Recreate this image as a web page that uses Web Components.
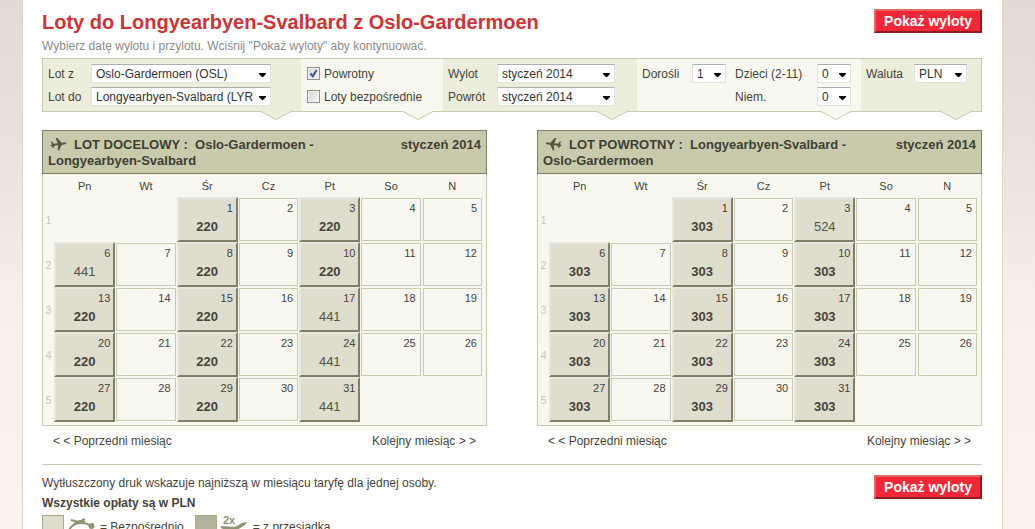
<!DOCTYPE html>
<html lang="pl">
<head>
<meta charset="utf-8">
<title>Loty do Longyearbyen-Svalbard z Oslo-Gardermoen</title>
<style>
html { height: 100%; overflow: hidden; }
body {
  margin: 0; min-height: 100%; color: #45443a;
  font: 12px/16px "Liberation Sans", Arial, sans-serif;
  background: linear-gradient(#e3d9d5 0, #e9dfdb 130px, #f8efeb 300px, #fcf2ee 529px) #fcf2ee;
}
</style>
</head>
<body>
<flight-page></flight-page>
<script>
const define = (name, html) => customElements.define(name, class extends HTMLElement {
  connectedCallback() {
    if (this.shadowRoot) return;
    const t = document.createElement('template');
    t.innerHTML = typeof html === 'function' ? html(this) : html;
    this.attachShadow({ mode: 'open' }).append(t.content.cloneNode(true));
  }
});

define('action-button', `
<style>
:host { display: block; flex: none; }
button {
  display: block; height: 24px; padding: 0 8px; color: #fff; cursor: pointer;
  font: bold 14px/20px "Liberation Sans", Arial, sans-serif;
  background: #f42738; border: 2px solid; border-color: #e4695f #8c1d1c #8c1d1c #e4695f; border-radius: 0;
}
</style>
<button type="button"><slot></slot></button>`);

define('drop-down', el => `
<style>
:host { display: flex; align-items: center; height: 19px; }
label { flex: none; width: var(--label, auto); white-space: nowrap; }
select {
  appearance: none; box-sizing: border-box; width: var(--field, 100px); height: 19px; margin: 0; padding: 0 17px 0 4px;
  font: 12px/16px "Liberation Sans", Arial, sans-serif; color: #333;
  border: 1px solid #e0e2dc; border-top-color: #adb0b0; border-radius: 1px;
  background: #fff url("data:image/svg+xml,%3Csvg xmlns='http://www.w3.org/2000/svg' width='7' height='4'%3E%3Cpath d='M0 0h7v1L4 4H3L0 1z'/%3E%3C/svg%3E") no-repeat right 4px top 8px;
}
</style>
<label for="s">${el.getAttribute('label')}</label>
<select id="s"><option>${el.getAttribute('value')}</option></select>`);

define('check-option', el => `
<style>
:host { display: flex; align-items: center; height: 19px; gap: 4px; }
input {
  appearance: none; box-sizing: border-box; flex: none; width: 13px; height: 13px; margin: 0;
  border: 1px solid #8e8f8f; box-shadow: inset 0 0 0 1px #f4f4f4;
  background: linear-gradient(135deg, #cfd2d6, #f6f6f6);
}
input:checked {
  background: url("data:image/svg+xml,%3Csvg xmlns='http://www.w3.org/2000/svg' width='11' height='11'%3E%3Cpath d='M2.5 5.5L4.8 8.3 8.6 2' fill='none' stroke='%233f5797' stroke-width='2'/%3E%3C/svg%3E"), linear-gradient(135deg, #cfd2d6, #f6f6f6);
}
label { white-space: nowrap; }
</style>
<input type="checkbox" id="c" ${el.hasAttribute('checked') ? 'checked' : ''}><label for="c"><slot></slot></label>`);

define('bar-section', `
<style>
:host {
  --fill: #f8f8f0; position: relative; display: grid; grid-template-rows: 19px 19px; row-gap: 4px; column-gap: 9px;
  padding: 5px; justify-content: start; background: var(--fill);
}
:host([tinted]) { --fill: #ecedda; }
:host([inset]) { padding-left: 6px; }
svg { position: absolute; right: 10px; top: 100%; display: block; fill: var(--fill); stroke: #c9caae; }
</style>
<slot></slot>
<svg width="30" height="9" viewBox="0 0 30 9" aria-hidden="true"><path stroke="none" d="M0 0H30V1L15 9 0 1z"/><path fill="none" d="M0 .5L15 8.5 30 .5"/></svg>`);

define('search-bar', `
<style>
:host { display: grid; grid-template-columns: 258fr 142fr 194fr 224fr 120fr; border: 1px solid #c9caae; }
.route { --label: 43px; --field: 180px; }
.dates { --label: 49px; --field: 118px; }
.adults { --label: 50px; --field: 34px; }
.kids { --label: 82px; --field: 34px; grid-column: 2; }
.money { --label: 48px; --field: 53px; }
</style>
<bar-section tinted>
  <drop-down class="route" label="Lot z" value="Oslo-Gardermoen (OSL)"></drop-down>
  <drop-down class="route" label="Lot do" value="Longyearbyen-Svalbard (LYR"></drop-down>
</bar-section>
<bar-section inset>
  <check-option checked>Powrotny</check-option>
  <check-option>Loty bezpośrednie</check-option>
</bar-section>
<bar-section tinted>
  <drop-down class="dates" label="Wylot" value="styczeń 2014"></drop-down>
  <drop-down class="dates" label="Powrót" value="styczeń 2014"></drop-down>
</bar-section>
<bar-section>
  <drop-down class="adults" label="Dorośli" value="1"></drop-down>
  <drop-down class="kids" label="Dzieci (2-11)" value="0"></drop-down>
  <drop-down class="kids" label="Niem." value="0"></drop-down>
</bar-section>
<bar-section tinted>
  <drop-down class="money" label="Waluta" value="PLN"></drop-down>
</bar-section>`);

define('plane-icon', `
<style>
:host { display: inline-block; width: 17px; height: 14px; vertical-align: -3px; }
:host([back]) svg { transform: scaleX(-1); }
svg { display: block; fill: #55543f; }
</style>
<svg width="17" height="14" viewBox="0 0 17 14" aria-hidden="true"><path d="M16.500 5.200C16 4.200 14 4.300 11.400 4.700L7.200 -.2 5.600 0 7.800 5.200 4 5.800 2 3.600 .8 3.800 2.100 6.300 .5 7.300 .6 8.200 2.600 7.900 2.200 10.100 3.200 10 4.900 7.600 8.300 7.200 7.700 12.500 9.200 12.300 11.600 6.900C14.500 6.500 16.600 6.100 16.500 5.200z"/></svg>`);

// January 2014 starts on a Wednesday
define('month-calendar', el => {
  const fares = Object.fromEntries(el.getAttribute('fares').split(' ').map(f => f.split(':')));
  const low = el.getAttribute('low');
  let rows = '';
  for (let w = 0; w < 5; w++) {
    rows += `<tr><th scope="row" class="week">${w + 1}</th>`;
    for (let d = 0; d < 7; d++) {
      const day = w * 7 + d - 1;
      if (day < 1 || day > 31) rows += '<td></td>';
      else if (fares[day]) rows += `<td><button type="button" class="day"><span>${day}</span><span class="fare${fares[day] === low ? ' low' : ''}">${fares[day]}</span></button></td>`;
      else rows += `<td><div class="day">${day}</div></td>`;
    }
    rows += '</tr>';
  }
  return `
<style>
:host { display: block; }
header {
  display: flex; justify-content: space-between; box-sizing: border-box; height: 44px; padding: 6px 5px 0;
  font-weight: bold; font-size: 13px; line-height: 16px; background: #c9caab; border: 1px solid #7f8163; color: #403f33;
}
h2 { margin: 0; font: inherit; max-width: 310px; }
h2 plane-icon { margin: 0 7px 0 2px; }
.body { padding: 0 3px 3px 0; border: 1px solid #c9caae; border-top: 0; background: #f8f8f0; }
table { width: 100%; table-layout: fixed; border-collapse: separate; border-spacing: 0; }
th, td { padding: 0; font-weight: normal; }
thead th { height: 23px; font-size: 11px; line-height: 16px; }
thead th:first-child { width: 11px; }
.week { font-size: 11px; color: #c8c8c0; text-align: center; }
tbody td { height: 45px; }
.day {
  display: flex; flex-direction: column; box-sizing: border-box; height: 43px; margin: 1px; padding: 2px 4px;
  border: 1px solid #c9caae; text-align: right; color: #45443a;
  font: 11px/14px "Liberation Sans", Arial, sans-serif;
}
button.day {
  width: 100%; height: 45px; margin: 0; padding: 2px 3px; border: 2px solid; border-radius: 0; justify-content: flex-start;
  border-color: #e7e6de #7f7e66 #7f7e66 #e7e6de; background: #deddce; cursor: pointer;
}
.fare { font-size: 13px; line-height: 24px; text-align: center; color: #55543f; }
.low { font-weight: bold; color: #45443a; }
nav { display: flex; justify-content: space-between; padding: 7px 11px 0; }
a { color: inherit; text-decoration: none; }
</style>
<header><h2><plane-icon ${el.hasAttribute('back') ? 'back' : ''}></plane-icon>${el.getAttribute('kind')} :&nbsp; ${el.getAttribute('route')}</h2><span>styczeń 2014</span></header>
<div class="body"><table>
<thead><tr><th></th>${['Pn', 'Wt', 'Śr', 'Cz', 'Pt', 'So', 'N'].map(d => `<th scope="col">${d}</th>`).join('')}</tr></thead>
<tbody>${rows}</tbody></table></div>
<nav><a href="#prev">&lt; &lt; Poprzedni miesiąc</a><a href="#next">Kolejny miesiąc &gt; &gt;</a></nav>`;
});

define('legend-item', `
<style>
:host { display: flex; gap: 4px; }
.swatch { box-sizing: border-box; width: 22px; height: 22px; background: var(--swatch); border: 1px solid #a9aa88; }
.text { margin-left: 1px; padding-top: 4px; white-space: nowrap; }
</style>
<span class="swatch"></span><slot name="icon"></slot><span class="text"><slot></slot></span>`);

define('flight-page', `
<style>
:host {
  display: block; box-sizing: border-box; min-height: 100vh; margin: 0 32px 0 22px; padding: 9px 20px 0 19px;
  background: #fff; border: solid #ddd6d2; border-width: 0 1px;
}
.row { display: flex; justify-content: space-between; align-items: flex-start; }
h1 { margin: 0; font-size: 20px; line-height: 26px; color: #ce3335; }
p { margin: 0; }
.hint { color: #8b8b8b; margin-top: 3px; margin-bottom: 4px; }
.months { display: grid; grid-template-columns: 1fr 1fr; column-gap: 50px; margin-top: 18px; }
hr { margin: 15px 0 10px; border: 0; border-top: 1px solid #c9caae; }
.fees { font-weight: bold; margin-top: 4px; }
.legend { display: flex; gap: 11px; margin-top: 4px; }
.legend svg { display: block; }
</style>
<div class="row"><h1>Loty do Longyearbyen-Svalbard z Oslo-Gardermoen</h1><action-button>Pokaż wyloty</action-button></div>
<p class="hint">Wybierz datę wylotu i przylotu. Wciśnij "Pokaż wyloty" aby kontynuować.</p>
<search-bar></search-bar>
<div class="months">
  <month-calendar kind="LOT DOCELOWY" route="Oslo-Gardermoen - Longyearbyen-Svalbard" low="220"
    fares="1:220 3:220 6:441 8:220 10:220 13:220 15:220 17:441 20:220 22:220 24:441 27:220 29:220 31:441"></month-calendar>
  <month-calendar back kind="LOT POWROTNY" route="Longyearbyen-Svalbard - Oslo-Gardermoen" low="303"
    fares="1:303 3:524 6:303 8:303 10:303 13:303 15:303 17:303 20:303 22:303 24:303 27:303 29:303 31:303"></month-calendar>
</div>
<hr>
<div class="row">
  <div>
    <p>Wytłuszczony druk wskazuje najniższą w miesiącu taryfę dla jednej osoby.</p>
    <p class="fees">Wszystkie opłaty są w PLN</p>
    <div class="legend">
      <legend-item style="--swatch:#deddce">
        <svg slot="icon" width="27" height="22" viewBox="0 0 27 22" aria-hidden="true" fill="none" stroke="#8f9273" stroke-width="2"><path d="M1 15C4 10 7 8 12 8S20 8 23 12"/><path d="M3 5L11 7 17 4M6 9L12 6 17 7" stroke-width="2"/><circle cx="23.500" cy="11" r="3" fill="#8f9273" stroke="none"/></svg>= Bezpośrednio
      </legend-item>
      <legend-item style="--swatch:#b3b39c">
        <svg slot="icon" width="27" height="22" viewBox="0 0 27 22" aria-hidden="true" fill="#8f9273"><text x="2" y="9" font-family="Liberation Sans" font-size="11" font-weight="bold">2x</text><path d="M0 11L14 12 21 8 26 7 24 10 16 15 8 17 0 13z"/></svg>= z przesiadką
      </legend-item>
    </div>
  </div>
  <action-button>Pokaż wyloty</action-button>
</div>`);
</script>
</body>
</html>
